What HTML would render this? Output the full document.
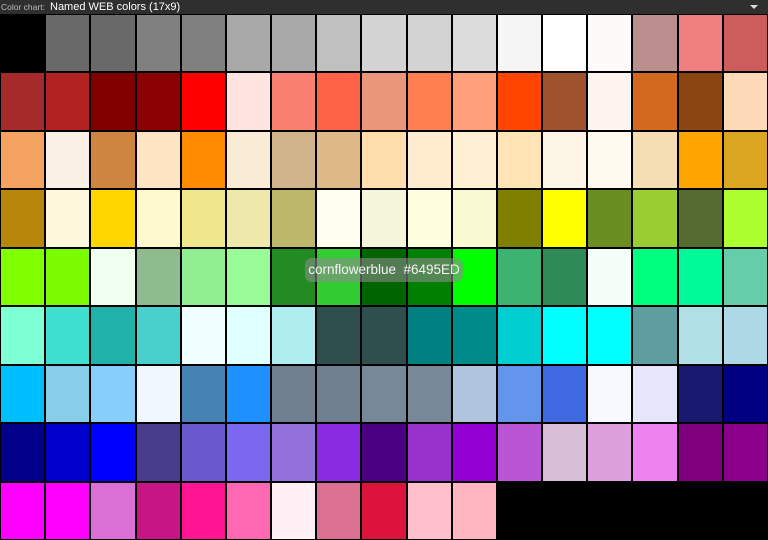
<!DOCTYPE html>
<html><head><meta charset="utf-8"><style>
*{margin:0;padding:0;box-sizing:border-box}
body{width:768px;height:540px;background:#000;overflow:hidden;font-family:"Liberation Sans",sans-serif;position:relative}
.hdr{position:absolute;left:0;top:0;width:768px;height:14px;background:#2f2f2f;color:#fff;font-size:11px;line-height:14px}
.hdr .l{position:absolute;left:1px;top:0;color:#bbb;font-size:8.5px}
.hdr .t{position:absolute;left:50px;top:0}
.hdr .a{position:absolute;right:10px;top:5px;width:0;height:0;border-left:4px solid transparent;border-right:4px solid transparent;border-top:4px solid #ddd}
.g{position:absolute;left:0;top:14px;width:768px;height:526px;display:grid;grid-template-columns:repeat(17,1fr);grid-template-rows:repeat(9,1fr)}
.g div{border:1px solid #000}
.tip{position:absolute;left:305px;top:258px;width:158px;height:24px;border-radius:7px;background:rgba(140,140,140,0.6);color:#f4f4f4;font-size:13.5px;line-height:24px;text-align:center;white-space:pre}
</style></head><body>
<div class="hdr"><span class="l">Color chart:</span><span class="t">Named WEB colors (17x9)</span><span class="a"></span></div>
<div class="g">
<div style="background:#000"></div><div style="background:#696969"></div><div style="background:#696969"></div><div style="background:#808080"></div><div style="background:#808080"></div><div style="background:#a9a9a9"></div><div style="background:#a9a9a9"></div><div style="background:#c0c0c0"></div><div style="background:#d3d3d3"></div><div style="background:#d3d3d3"></div><div style="background:#dcdcdc"></div><div style="background:#f5f5f5"></div><div style="background:#fff"></div><div style="background:#fffafa"></div><div style="background:#bc8f8f"></div><div style="background:#f08080"></div><div style="background:#cd5c5c"></div>
<div style="background:#a52a2a"></div><div style="background:#b22222"></div><div style="background:#800000"></div><div style="background:#8b0000"></div><div style="background:#f00"></div><div style="background:#ffe4e1"></div><div style="background:#fa8072"></div><div style="background:#ff6347"></div><div style="background:#e9967a"></div><div style="background:#ff7f50"></div><div style="background:#ffa07a"></div><div style="background:#ff4500"></div><div style="background:#a0522d"></div><div style="background:#fff5ee"></div><div style="background:#d2691e"></div><div style="background:#8b4513"></div><div style="background:#ffdab9"></div>
<div style="background:#f4a460"></div><div style="background:#faf0e6"></div><div style="background:#cd853f"></div><div style="background:#ffe4c4"></div><div style="background:#ff8c00"></div><div style="background:#faebd7"></div><div style="background:#d2b48c"></div><div style="background:#deb887"></div><div style="background:#ffdead"></div><div style="background:#ffebcd"></div><div style="background:#ffefd5"></div><div style="background:#ffe4b5"></div><div style="background:#fdf5e6"></div><div style="background:#fffaf0"></div><div style="background:#f5deb3"></div><div style="background:#ffa500"></div><div style="background:#daa520"></div>
<div style="background:#b8860b"></div><div style="background:#fff8dc"></div><div style="background:#ffd700"></div><div style="background:#fffacd"></div><div style="background:#f0e68c"></div><div style="background:#eee8aa"></div><div style="background:#bdb76b"></div><div style="background:#fffff0"></div><div style="background:#f5f5dc"></div><div style="background:#ffffe0"></div><div style="background:#fafad2"></div><div style="background:#808000"></div><div style="background:#ff0"></div><div style="background:#6b8e23"></div><div style="background:#9acd32"></div><div style="background:#556b2f"></div><div style="background:#adff2f"></div>
<div style="background:#7fff00"></div><div style="background:#7cfc00"></div><div style="background:#f0fff0"></div><div style="background:#8fbc8f"></div><div style="background:#90ee90"></div><div style="background:#98fb98"></div><div style="background:#228b22"></div><div style="background:#32cd32"></div><div style="background:#006400"></div><div style="background:#008000"></div><div style="background:#0f0"></div><div style="background:#3cb371"></div><div style="background:#2e8b57"></div><div style="background:#f5fffa"></div><div style="background:#00ff7f"></div><div style="background:#00fa9a"></div><div style="background:#66cdaa"></div>
<div style="background:#7fffd4"></div><div style="background:#40e0d0"></div><div style="background:#20b2aa"></div><div style="background:#48d1cc"></div><div style="background:#f0ffff"></div><div style="background:#e0ffff"></div><div style="background:#afeeee"></div><div style="background:#2f4f4f"></div><div style="background:#2f4f4f"></div><div style="background:#008080"></div><div style="background:#008b8b"></div><div style="background:#00ced1"></div><div style="background:#0ff"></div><div style="background:#0ff"></div><div style="background:#5f9ea0"></div><div style="background:#b0e0e6"></div><div style="background:#add8e6"></div>
<div style="background:#00bfff"></div><div style="background:#87ceeb"></div><div style="background:#87cefa"></div><div style="background:#f0f8ff"></div><div style="background:#4682b4"></div><div style="background:#1e90ff"></div><div style="background:#708090"></div><div style="background:#708090"></div><div style="background:#778899"></div><div style="background:#778899"></div><div style="background:#b0c4de"></div><div style="background:#6495ed"></div><div style="background:#4169e1"></div><div style="background:#f8f8ff"></div><div style="background:#e6e6fa"></div><div style="background:#191970"></div><div style="background:#000080"></div>
<div style="background:#00008b"></div><div style="background:#0000cd"></div><div style="background:#00f"></div><div style="background:#483d8b"></div><div style="background:#6a5acd"></div><div style="background:#7b68ee"></div><div style="background:#9370db"></div><div style="background:#8a2be2"></div><div style="background:#4b0082"></div><div style="background:#9932cc"></div><div style="background:#9400d3"></div><div style="background:#ba55d3"></div><div style="background:#d8bfd8"></div><div style="background:#dda0dd"></div><div style="background:#ee82ee"></div><div style="background:#800080"></div><div style="background:#8b008b"></div>
<div style="background:#f0f"></div><div style="background:#f0f"></div><div style="background:#da70d6"></div><div style="background:#c71585"></div><div style="background:#ff1493"></div><div style="background:#ff69b4"></div><div style="background:#fff0f5"></div><div style="background:#db7093"></div><div style="background:#dc143c"></div><div style="background:#ffc0cb"></div><div style="background:#ffb6c1"></div>
</div>
<div class="tip">cornflowerblue  #6495ED</div>
</body></html>
